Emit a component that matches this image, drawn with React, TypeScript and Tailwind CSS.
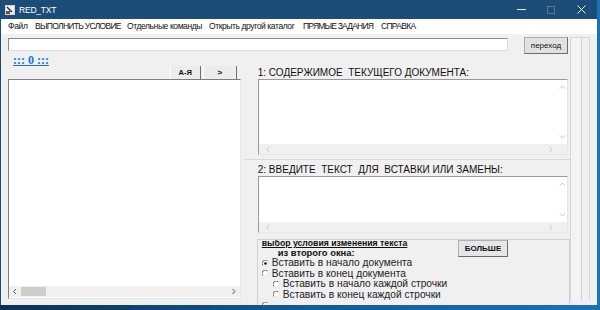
import React from "react";

const Chev = ({ dir, color = "#c4c4c4" }: { dir: "l" | "r" | "u" | "d"; color?: string }) => {
  const paths: Record<string, string> = {
    l: "M4 1 L1.5 3.5 L4 6",
    r: "M1.5 1 L4 3.5 L1.5 6",
    u: "M1 4.5 L3.5 2 L6 4.5",
    d: "M1 2.5 L3.5 5 L6 2.5",
  };
  return (
    <svg width="7" height="7" viewBox="0 0 7 7" className="block">
      <path d={paths[dir]} fill="none" stroke={color} strokeWidth="1" />
    </svg>
  );
};

const Radio = ({ checked, label, indent }: { checked?: boolean; label: string; indent?: boolean }) => (
  <div className={`flex items-center h-[10.5px] ${indent ? "pl-[11px]" : ""}`}>
    <svg width="7" height="7" viewBox="0 0 7 7" className="block mr-[3px] shrink-0">
      <circle cx="3.5" cy="3.5" r="3" fill="#ffffff" />
      <path d="M1 5.5 A3 3 0 0 1 5.5 1" fill="none" stroke="#6e6e6e" strokeWidth="1" />
      <path d="M6 2 A3 3 0 0 1 2 6" fill="none" stroke="#e0e0e0" strokeWidth="1" />
      {checked && <circle cx="3.5" cy="3.5" r="1.3" fill="#111" />}
    </svg>
    <span className="text-[10.2px] leading-[10px] text-[#222] whitespace-nowrap">{label}</span>
  </div>
);

const TextBox = ({ h }: { h: string }) => (
  <div className={`flex flex-col bg-white border-t border-l border-[#9a9a9a] border-r border-r-[#e6e6e6] border-b border-b-[#e6e6e6] ${h}`}>
    <div className="flex flex-1">
      <div className="flex-1" />
      <div className="w-[10px] flex flex-col items-center justify-between py-[4px]">
        <Chev dir="u" />
        <Chev dir="d" />
      </div>
    </div>
    <div className="h-[10px] bg-[#f0f0f0] flex items-center justify-between pl-[6px] pr-[12px]">
      <Chev dir="l" />
      <Chev dir="r" />
    </div>
  </div>
);

export default function App() {
  const menu: [string, string, string][] = [
    ["Файл", "w-[27px]", "tracking-[-0.3px]"],
    ["ВЫПОЛНИТЬ УСЛОВИЕ", "w-[92px]", "tracking-[-0.7px]"],
    ["Отдельные команды", "w-[82px]", "tracking-[-0.4px]"],
    ["Открыть другой каталог", "w-[94px]", "tracking-[-0.4px]"],
    ["ПРЯМЫЕ ЗАДАНИЯ", "w-[78px]", "tracking-[-0.8px]"],
    ["СПРАВКА", "w-[60px]", "tracking-[-0.7px]"],
  ];
  return (
    <div className="w-[600px] h-[310px] overflow-hidden bg-gradient-to-r from-[#0a3158] via-[#125b93] to-[#1b72b4] font-['Liberation_Sans',Arial,sans-serif]">
      <div className="w-[597px] h-[305px] flex flex-col border-l border-[#1c4a73] bg-[#f0f0f0]">
        {/* Title bar */}
        <div className="h-[19px] bg-[#1c4d78] flex items-center shrink-0">
          <svg width="10" height="10" viewBox="0 0 10 10" className="ml-[4px] mr-[4px]">
            <rect x="0.5" y="0.5" width="9" height="9" fill="#f4f4f4" stroke="#d0d0d0" />
            <path d="M2 2 L7 7" stroke="#333" strokeWidth="1.5" />
            <rect x="1" y="6" width="4" height="3" fill="#555" />
          </svg>
          <span className="text-white text-[8.5px] leading-[12px] tracking-[-0.2px]">RED_TXT</span>
          <div className="flex-1" />
          <div className="w-[30px] flex justify-center">
            <div className="w-[9px] h-px bg-[#e8eef4]" />
          </div>
          <div className="w-[30px] flex justify-center">
            <div className="w-[8px] h-[8px] border border-[#4f7aa0]" />
          </div>
          <div className="w-[30px] flex justify-center">
            <svg width="9" height="9" viewBox="0 0 9 9">
              <path d="M0.5 0.5 L8.5 8.5 M8.5 0.5 L0.5 8.5" stroke="#f2f5f8" strokeWidth="1" />
            </svg>
          </div>
          <div className="w-[1px]" />
        </div>
        {/* Menu bar */}
        <div className="h-[15px] bg-white flex items-center pl-[7px] shrink-0">
          {menu.map(([t, w, tr]) => (
            <div key={t} className={`${w} ${tr} text-[8.5px] leading-[11px] text-[#111] whitespace-nowrap`}>
              {t}
            </div>
          ))}
        </div>
        {/* Body */}
        <div className="flex-1 flex pl-[7px] pt-[3px] min-h-0">
          <div className="w-[562px] flex flex-col">
            {/* row 1 */}
            <div className="flex items-start h-[17px]">
              <div className="w-[500px] h-[13px] mt-[1px] bg-white border-t border-l border-[#8a8a8a] border-r border-r-[#dcdcdc] border-b border-b-[#dcdcdc]" />
              <div className="ml-[16px] w-[44px] h-[17px] bg-[#e1e1e1] border border-[#adadad] border-r-[#6e6e6e] border-b-[#6e6e6e] flex items-center justify-center text-[8px] text-[#111]">
                переход
              </div>
            </div>
            {/* row 2 */}
            <div className="flex flex-1 min-h-0">
              {/* left column */}
              <div className="w-[234px] flex flex-col">
                <div className="h-[12px] pl-[5px] flex items-center">
                  <span className="font-['Liberation_Serif',serif] font-bold text-[12px] leading-[12px] text-[#1a73d9] underline">
                    ::: 0 :::
                  </span>
                </div>
                <div className="h-[13px] flex justify-end pr-[4px]">
                  <div className="w-[31px] h-[13px] bg-[#ececec] border-l border-white border-r border-r-[#707070] flex items-center justify-center text-[7.5px] font-bold text-[#111]">
                    А-Я
                  </div>
                  <div className="w-[34px] h-[13px] ml-[2px] bg-[#ececec] border-l border-white border-r border-r-[#707070] flex items-center justify-center text-[8px] font-bold text-[#111]">
                    &gt;
                  </div>
                </div>
                <div className="h-[220px] bg-white border-t border-l border-[#7f7f7f] border-r border-r-[#e6e6e6] border-b border-b-[#e6e6e6] flex flex-col">
                  <div className="flex-1" />
                  <div className="h-[11px] bg-[#f0f0f0] flex items-center mb-[1px] pl-[3px] pr-[2px]">
                    <Chev dir="l" color="#555" />
                    <div className="ml-[2px] w-[25px] h-[9px] bg-[#cdcdcd]" />
                    <div className="flex-1" />
                    <Chev dir="r" color="#555" />
                  </div>
                </div>
              </div>
              {/* right column */}
              <div className="w-[328px] ml-[3px] flex flex-col">
                <div className="pl-[14px] pr-[2px] pt-[12px] pb-[4px] border-b border-[#d9d9d9]">
                  <div className="h-[13px] text-[10px] leading-[13px] text-[#111] whitespace-pre">1: СОДЕРЖИМОЕ  ТЕКУЩЕГО ДОКУМЕНТА:</div>
                  <TextBox h="h-[76px]" />
                </div>
                <div className="pl-[14px] pr-[2px] pt-[4px]">
                  <div className="h-[12px] text-[10px] leading-[12px] text-[#111] whitespace-pre">2: ВВЕДИТЕ  ТЕКСТ  ДЛЯ  ВСТАВКИ ИЛИ ЗАМЕНЫ:</div>
                  <TextBox h="h-[57px]" />
                </div>
                <div className="ml-[13px] mt-[6px] flex-1 border-t border-l border-r border-[#cfcfcf] overflow-hidden">
                  <div className="flex items-start pl-[4px]">
                    <div className="flex flex-col -mt-[2px]">
                      <span className="font-bold text-[8.7px] leading-[10px] text-[#111] underline bg-[#f0f0f0] whitespace-nowrap self-start">
                        выбор условия изменения текста
                      </span>
                      <span className="font-bold text-[9.4px] leading-[10px] text-[#111] pl-[16px] whitespace-nowrap">
                        из второго окна:
                      </span>
                    </div>
                    <div className="flex-1" />
                    <div className="mr-[61px] w-[50px] h-[17px] bg-[#e6e6e6] border border-[#b0b0b0] border-r-[#6a6a6a] border-b-[#6a6a6a] flex items-center justify-center text-[8px] font-bold text-[#111]">
                      БОЛЬШЕ
                    </div>
                  </div>
                  <div className="pl-[4px] flex flex-col">
                    <Radio checked label="Вставить в начало документа" />
                    <Radio label="Вставить в конец документа" />
                    <Radio indent label="Вставить в начало каждой строчки" />
                    <Radio indent label="Вставить в конец каждой строчки" />
                    <Radio label="" />
                  </div>
                </div>
              </div>
            </div>
          </div>
          {/* right strip */}
          <div className="w-[20px] mb-[5px] flex border-t border-l border-[#d6d6d6] bg-[#f3f3f3]">
            <div className="w-[11px] border-r border-[#d0d0d0]" />
            <div className="w-[8px] border-r border-[#d6d6d6] bg-[#f0f0f0]" />
          </div>
        </div>
      </div>
    </div>
  );
}
